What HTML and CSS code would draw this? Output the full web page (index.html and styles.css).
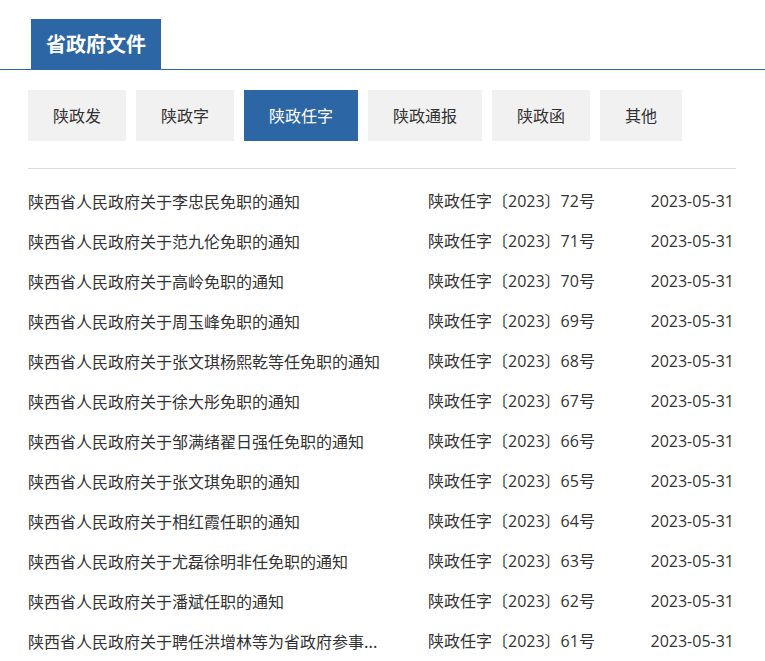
FILE: index.html
```html
<!DOCTYPE html>
<html lang="zh-CN">
<head>
<meta charset="utf-8">
<title>省政府文件</title>
<link rel="stylesheet" href="styles.css">
</head>
<body>
<div class="header">
  <div class="header-tab">省政府文件</div>
</div>
<div class="content">
  <div class="tabs">
    <div class="tab">陕政发</div>
    <div class="tab">陕政字</div>
    <div class="tab active">陕政任字</div>
    <div class="tab">陕政通报</div>
    <div class="tab">陕政函</div>
    <div class="tab">其他</div>
  </div>
  <ul class="list">
    <li class="row"><span class="title">陕西省人民政府关于李忠民免职的通知</span><span class="num">陕政任字〔2023〕72号</span><span class="date">2023-05-31</span></li>
    <li class="row"><span class="title">陕西省人民政府关于范九伦免职的通知</span><span class="num">陕政任字〔2023〕71号</span><span class="date">2023-05-31</span></li>
    <li class="row"><span class="title">陕西省人民政府关于高岭免职的通知</span><span class="num">陕政任字〔2023〕70号</span><span class="date">2023-05-31</span></li>
    <li class="row"><span class="title">陕西省人民政府关于周玉峰免职的通知</span><span class="num">陕政任字〔2023〕69号</span><span class="date">2023-05-31</span></li>
    <li class="row"><span class="title">陕西省人民政府关于张文琪杨熙乾等任免职的通知</span><span class="num">陕政任字〔2023〕68号</span><span class="date">2023-05-31</span></li>
    <li class="row"><span class="title">陕西省人民政府关于徐大彤免职的通知</span><span class="num">陕政任字〔2023〕67号</span><span class="date">2023-05-31</span></li>
    <li class="row"><span class="title">陕西省人民政府关于邹满绪翟日强任免职的通知</span><span class="num">陕政任字〔2023〕66号</span><span class="date">2023-05-31</span></li>
    <li class="row"><span class="title">陕西省人民政府关于张文琪免职的通知</span><span class="num">陕政任字〔2023〕65号</span><span class="date">2023-05-31</span></li>
    <li class="row"><span class="title">陕西省人民政府关于相红霞任职的通知</span><span class="num">陕政任字〔2023〕64号</span><span class="date">2023-05-31</span></li>
    <li class="row"><span class="title">陕西省人民政府关于尤磊徐明非任免职的通知</span><span class="num">陕政任字〔2023〕63号</span><span class="date">2023-05-31</span></li>
    <li class="row"><span class="title">陕西省人民政府关于潘斌任职的通知</span><span class="num">陕政任字〔2023〕62号</span><span class="date">2023-05-31</span></li>
    <li class="row"><span class="title">陕西省人民政府关于聘任洪增林等为省政府参事...</span><span class="num">陕政任字〔2023〕61号</span><span class="date">2023-05-31</span></li>
  </ul>
</div>
</body>
</html>
```

FILE: styles.css
```css
html, body {
  margin: 0;
  padding: 0;
  background: #fff;
}
body {
  font-family: "Noto Sans CJK SC", "Noto Sans", sans-serif;
  color: #333;
  font-size: 16px;
}
.header {
  padding: 19px 0 0 31px;
  border-bottom: 1px solid #2c66a4;
  display: flex;
}
.header-tab {
  width: 130px;
  height: 50px;
  line-height: 50px;
  text-align: center;
  background: #2c66a4;
  color: #fff;
  font-size: 20px;
  font-weight: bold;
}
.content {
  padding: 20px 29px 0 28px;
}
.tabs {
  display: flex;
  gap: 10px;
  padding-bottom: 27px;
  border-bottom: 1px solid #ddd;
}
.tab {
  height: 51px;
  line-height: 51px;
  padding: 0 25px;
  background: #f1f1f1;
  color: #333;
}
.tab.active {
  background: #2c66a4;
  color: #fff;
}
.list {
  list-style: none;
  margin: 0;
  padding: 12px 0 0 0;
}
.row {
  display: flex;
  height: 40px;
  line-height: 40px;
}
.title {
  width: 400px;
  white-space: nowrap;
  overflow: hidden;
}
.num {
  flex: 1;
  font-family: "Open Sans", "Noto Sans CJK SC", sans-serif;
}
.date {
  text-align: right;
  font-family: "Open Sans", "Noto Sans CJK SC", sans-serif;
  padding-right: 2px;
}
```
